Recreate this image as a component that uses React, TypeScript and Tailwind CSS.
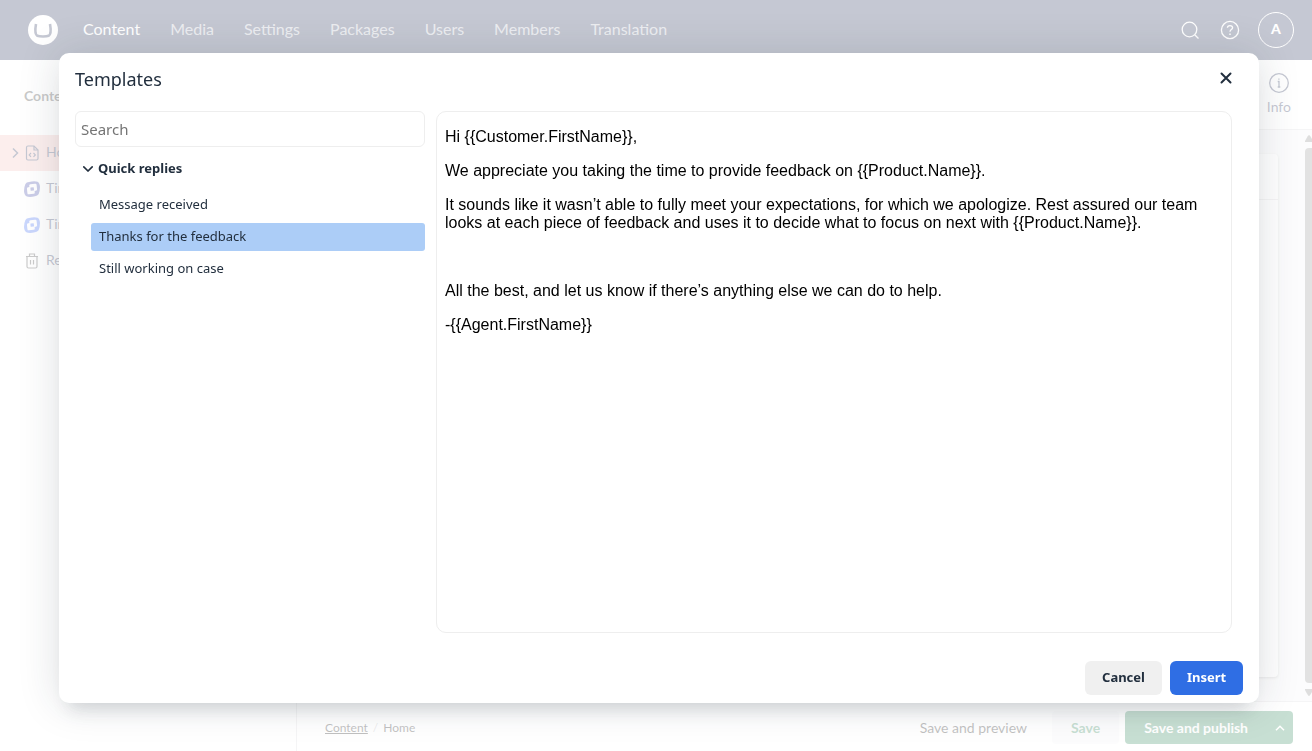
import React from "react";

const sections = ["Content", "Media", "Settings", "Packages", "Users", "Members", "Translation"];
const replies = ["Message received", "Thanks for the feedback", "Still working on case"];

function LinkedSquares({ className }: { className: string }) {
  return (
    <svg viewBox="0 0 16 16" className={className} aria-hidden="true">
      <path
        d="M5 1Q10.500 -0.600 13.600 0.800Q15.800 2 16 6Q16 10 14.600 13.300Q13.500 15 11 15.300Q5 16.600 2.400 15.200Q0.200 14 0 10Q0 6 1.400 2.900Q2.500 1.300 5 1Z"
        fill="currentColor"
      />
      <g transform="rotate(-6 8 8)">
        <rect x="3" y="5.800" width="7.400" height="7.200" rx="1.300" fill="#fff" />
        <rect x="5.600" y="3" width="7.400" height="7.200" rx="1.300" fill="#fff" />
        <rect x="6.500" y="6.300" width="3.400" height="3.400" rx="0.400" fill="currentColor" />
      </g>
    </svg>
  );
}

function Header() {
  return (
    <header className="flex h-15 shrink-0 items-center bg-[#1b264f] pr-[18px] pl-7 text-white">
      <a href="#home" aria-label="Home" className="mr-[25px]">
        <svg viewBox="0 0 30 30" className="size-[30px]" aria-hidden="true">
          <circle cx="15" cy="15" r="15" fill="#fff" />
          <path
            d="M8 9C7.100 14 7 19.500 9.400 20.800C11.500 21.700 18.500 21.700 20.600 20.800C23 19.500 22.900 14 22 9"
            fill="none"
            stroke="#1b264f"
            strokeWidth="2.6"
          />
        </svg>
      </a>
      <nav className="flex flex-1 gap-[30px] pb-0.5 text-base">
        {sections.map((name, i) => (
          <a key={name} href={"#" + name} className={i === 0 ? "text-white" : "text-white/70"}>
            {name}
          </a>
        ))}
      </nav>
      <div className="flex items-center gap-[18px]">
        <div className="flex items-center gap-5">
          <button type="button" aria-label="Search">
            <svg viewBox="0 0 20 20" className="size-5" fill="none" stroke="currentColor" strokeWidth="1.300" aria-hidden="true">
              <circle cx="9.500" cy="9.500" r="7.300" />
              <path d="M14.700 14.700L18.500 18.500" />
            </svg>
          </button>
          <button type="button" aria-label="Help">
            <svg viewBox="0 0 20 20" className="size-5" fill="none" stroke="currentColor" strokeWidth="1.300" aria-hidden="true">
              <circle cx="10" cy="10" r="8.600" />
              <path d="M7.400 7.800C7.400 4.800 12.600 4.800 12.600 7.800C12.600 9.600 10 9.600 10 11.700" />
              <path d="M10 13.500V15" strokeWidth="1.500" />
            </svg>
          </button>
        </div>
        <button
          type="button"
          aria-label="Account"
          className="flex size-9 items-center justify-center rounded-full border border-white pb-0.5 text-sm font-black"
        >
          A
        </button>
      </div>
    </header>
  );
}

function Sidebar() {
  const row = "flex h-9 items-center gap-1.5 pl-6";
  return (
    <aside className="w-[297px] shrink-0 border-r border-[#d8d7d9] bg-white text-sm text-[#1b264f]">
      <h2 className="flex h-[75px] items-center pb-1 pl-6 font-bold text-[#2a2a2a]">Content</h2>
      <ul>
        <li className="flex h-9 items-center gap-[5px] bg-[#f1bcb8] pl-[11px]">
          <svg viewBox="0 0 8 12" className="h-3 w-2" fill="none" stroke="currentColor" strokeWidth="1.500" aria-hidden="true">
            <path d="M2 1.500L6.500 6L2 10.500" />
          </svg>
          <svg viewBox="0 0 16 16" className="size-4" fill="none" stroke="currentColor" strokeWidth="1.200" aria-hidden="true">
            <path d="M4 1H10L14 5V13.500Q14 15 12.500 15H4Q2.500 15 2.500 13.500V2.500Q2.500 1 4 1Z" />
            <path d="M10 1V5H14M7 8L5.200 9.900L7 11.800M9.500 8L11.300 9.900L9.500 11.800" />
          </svg>
          <a href="#home" className="pb-0.5 pl-px">Home</a>
        </li>
        <li className={row}>
          <LinkedSquares className="size-4 text-[#333ba3]" />
          <a href="#tiny-1" className="pb-0.5">Tiny</a>
        </li>
        <li className={row}>
          <LinkedSquares className="size-4 text-[#2f5ff7]" />
          <a href="#tiny-2" className="pb-0.5">Tiny</a>
        </li>
        <li className={row}>
          <svg viewBox="0 0 16 16" className="size-4 text-[#333]" fill="none" stroke="currentColor" strokeWidth="1.200" aria-hidden="true">
            <path d="M2 3.500H14M5.500 3.500V1H10.500V3.500M3 3.500V13.500Q3 15 4.500 15H11.500Q13 15 13 13.500V3.500M6.500 7V11.500M9.500 7V11.500" />
          </svg>
          <a href="#bin" className="pb-0.5">Recycle</a>
        </li>
      </ul>
    </aside>
  );
}

function Workspace() {
  return (
    <main className="flex min-w-0 flex-1 flex-col">
      <div className="flex h-[70px] shrink-0 justify-end border-b border-[#d8d7d9] bg-white pr-[21px]">
        <button type="button" className="flex flex-col items-center gap-1 pt-[13px] text-sm text-[#1b264f]">
          <svg viewBox="0 0 20 20" className="size-5" fill="none" stroke="currentColor" strokeWidth="1.300" aria-hidden="true">
            <circle cx="10" cy="10" r="9.300" />
            <path d="M8.700 8.500H10V14M8.700 14H11.300M9.900 5.500V6.700" />
          </svg>
          Info
        </button>
      </div>
      <div className="flex min-h-0 flex-1 bg-[#f3f3f5]">
        <div className="min-w-0 flex-1 px-[27px] py-6">
          <div className="h-full rounded-sm bg-white shadow-[0_1px_3px_rgba(0,0,0,0.3)]">
            <div className="h-[46px] border-b border-[#d8d7d9]" />
          </div>
        </div>
        <div className="flex w-[7px] flex-col items-center gap-1.5 overflow-hidden py-[5px] text-[#7e7e7e]" aria-hidden="true">
          <svg viewBox="0 0 8 7" className="h-[7px] w-2 shrink-0" fill="currentColor">
            <path d="M4 0Q5 0 8 6V7H0V6Q3 0 4 0Z" />
          </svg>
          <div className="w-full flex-1 rounded-l-sm bg-[#8b8b8b]" />
          <svg viewBox="0 0 8 7" className="h-[7px] w-2 shrink-0" fill="currentColor">
            <path d="M4 7Q5 7 8 1V0H0V1Q3 7 4 7Z" />
          </svg>
        </div>
      </div>
      <footer className="flex h-[50px] shrink-0 items-center border-t border-[#d8d7d9] bg-white pt-0.5 pr-[19px] pl-7 text-sm">
        <nav className="flex flex-1 gap-[5px] text-xs text-[#060606]">
          <a href="#content" className="underline">Content</a>
          <span className="text-[#b0b0b0]">/</span>
          <span>Home</span>
        </nav>
        <button type="button" className="mr-[25px] h-[33px] text-[#060606]">Save and preview</button>
        <button type="button" className="mr-1.5 h-[33px] rounded-sm bg-[#f3f3f5] px-[19px] font-bold text-[#237f4f]">Save</button>
        <button type="button" className="h-[33px] rounded-l-sm bg-[#237f4f] pr-[18px] pl-[19px] font-bold text-white">
          Save and publish
        </button>
        <button type="button" aria-label="More publishing options" className="flex h-[33px] w-[27px] items-center justify-center rounded-r-sm bg-[#237f4f] text-white">
          <svg viewBox="0 0 10 6" className="h-1.5 w-2.5" fill="none" stroke="currentColor" strokeWidth="1.500" aria-hidden="true">
            <path d="M1 5.200L5 1.200L9 5.200" />
          </svg>
        </button>
      </footer>
    </main>
  );
}

function TemplatesDialog() {
  return (
    <div className="fixed inset-0 bg-white/75 pt-[53px] pr-[53px] pb-12 pl-[59px]">
      <div
        role="dialog"
        aria-labelledby="templates-title"
        className="flex h-full flex-col rounded-[10px] bg-white font-['Noto_Sans',sans-serif] text-[#222f3e] shadow-[0_16px_16px_-10px_rgba(34,47,62,0.15),0_0_40px_1px_rgba(34,47,62,0.15)]"
      >
        <div className="flex h-[50px] shrink-0 items-center justify-between pr-[26px] pl-4">
          <h1 id="templates-title" className="pt-0.5 text-lg">Templates</h1>
          <button type="button" aria-label="Close">
            <svg viewBox="0 0 14 14" className="size-[14px]" fill="none" stroke="currentColor" strokeWidth="2" strokeLinecap="round" aria-hidden="true">
              <path d="M2.500 2.500L11.500 11.500M11.500 2.500L2.500 11.500" />
            </svg>
          </button>
        </div>
        <div className="flex min-h-0 flex-1 gap-[11px] pt-2 pr-[27px] pl-4">
          <div className="w-[350px] shrink-0">
            <input
              type="text"
              aria-label="Search"
              placeholder="Search"
              className="block h-9 w-full rounded-md border border-[#eee] px-[5px] text-[15px] placeholder:text-[#757575]"
            />
            <button type="button" className="mt-2 flex h-7 w-full items-center gap-[5px] pl-2 text-[13px] font-bold">
              <svg viewBox="0 0 10 6" className="h-1.5 w-2.5" fill="none" stroke="currentColor" strokeWidth="1.600" strokeLinecap="round" aria-hidden="true">
                <path d="M0.800 0.900L5 5L9.200 0.900" />
              </svg>
              Quick replies
            </button>
            <ul className="mt-2 flex flex-col gap-1 pl-4 text-[13px]">
              {replies.map((name, i) => (
                <li key={name}>
                  <button
                    type="button"
                    className={
                      i === 1
                        ? "block h-7 w-full rounded-[3px] bg-[#accdf7] px-2 text-left"
                        : "block h-7 w-full rounded-[3px] px-2 text-left"
                    }
                  >
                    {name}
                  </button>
                </li>
              ))}
            </ul>
          </div>
          <div className="flex min-w-0 flex-1 flex-col gap-4 rounded-[10px] border border-[#eee] px-2 py-4 font-['Liberation_Sans',Arial,sans-serif] text-base leading-[18px] text-black">
            <p>{"Hi {{Customer.FirstName}},"}</p>
            <p>{"We appreciate you taking the time to provide feedback on {{Product.Name}}."}</p>
            <p>
              {
                "It sounds like it wasn’t able to fully meet your expectations, for which we apologize. Rest assured our team looks at each piece of feedback and uses it to decide what to focus on next with {{Product.Name}}."
              }
            </p>
            <p>&nbsp;</p>
            <p>All the best, and let us know if there’s anything else we can do to help.</p>
            <p>{"-{{Agent.FirstName}}"}</p>
          </div>
        </div>
        <div className="flex shrink-0 justify-end gap-2 px-4 pt-7 pb-2 text-[13px] font-bold">
          <button type="button" className="h-[34px] w-[77px] rounded-md bg-[#f0f0f0]">Cancel</button>
          <button type="button" className="h-[34px] w-[73px] rounded-md bg-[#2f6ee4] text-white">Insert</button>
        </div>
      </div>
    </div>
  );
}

export default function App() {
  return (
    <div className="flex h-screen flex-col overflow-hidden bg-white font-['Lato',sans-serif]">
      <Header />
      <div className="flex min-h-0 flex-1">
        <Sidebar />
        <Workspace />
      </div>
      <TemplatesDialog />
    </div>
  );
}
